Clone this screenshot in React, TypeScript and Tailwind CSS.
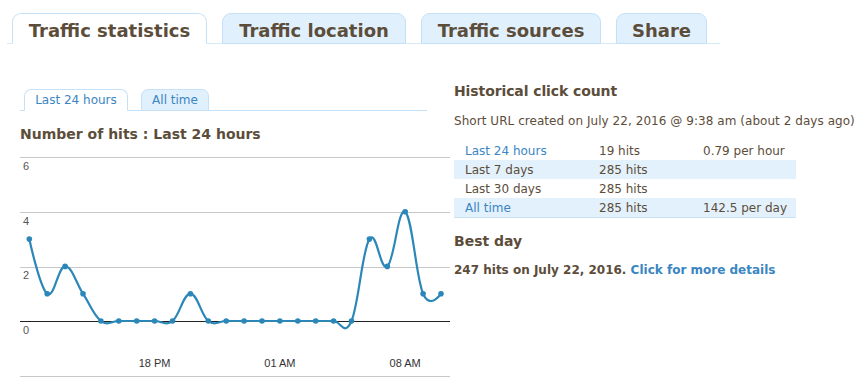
import React from "react";

const hits = [3, 1, 2, 1, 0, 0, 0, 0, 0, 1, 0, 0, 0, 0, 0, 0, 0, 0, 0, 3, 2, 4, 1, 1];

// chart geometry (svg coords)
const X0 = 9.3;
const DX = 17.9;
const BASE = 165;
const UNIT = 27.3;

function splinePath(vals: number[]) {
  const pts = vals.map((v, i) => ({ x: X0 + i * DX, y: BASE - v * UNIT }));
  const smoothing = 1.5;
  const denom = smoothing + 1;
  const ctrl = pts.map((p, i) => {
    const prev = pts[i - 1];
    const next = pts[i + 1];
    if (!prev || !next) return { lx: p.x, ly: p.y, rx: p.x, ry: p.y };
    const lx = (smoothing * p.x + prev.x) / denom;
    let ly = (smoothing * p.y + prev.y) / denom;
    const rx = (smoothing * p.x + next.x) / denom;
    let ry = (smoothing * p.y + next.y) / denom;
    const corr = ((ry - ly) * (rx - p.x)) / (rx - lx) + p.y - ry;
    ly += corr;
    ry += corr;
    return { lx, ly, rx, ry };
  });
  let d = `M ${pts[0].x} ${pts[0].y}`;
  for (let i = 1; i < pts.length; i++) {
    const a = ctrl[i - 1];
    const b = ctrl[i];
    d += ` C ${a.rx} ${a.ry} ${b.lx} ${b.ly} ${pts[i].x} ${pts[i].y}`;
  }
  return { d, pts };
}

function HitsChart() {
  const { d, pts } = splinePath(hits);
  const grid = [1, 56, 111];
  return (
    <svg width="430" height="222" viewBox="0 0 430 222" className="block">
      {grid.map((y) => (
        <line key={y} x1="0" x2="430" y1={y + 0.5} y2={y + 0.5} stroke="#c8c8c8" strokeWidth="1" />
      ))}
      <line x1="0" x2="430" y1="165.5" y2="165.5" stroke="#222" strokeWidth="1" />
      <line x1="0" x2="430" y1="220.5" y2="220.5" stroke="#c8c8c8" strokeWidth="1" />
      <g fontFamily="'Liberation Sans', Arial, sans-serif" fontSize="11" fill="#555">
        <text x="3" y="14">6</text>
        <text x="3" y="69">4</text>
        <text x="3" y="123">2</text>
        <text x="3" y="178">0</text>
      </g>
      <g fontFamily="'Liberation Sans', Arial, sans-serif" fontSize="11" fill="#333" textAnchor="middle">
        <text x={X0 + 7 * DX} y="211">18 PM</text>
        <text x={X0 + 14 * DX} y="211">01 AM</text>
        <text x={X0 + 21 * DX} y="211">08 AM</text>
      </g>
      <path d={d} fill="none" stroke="#2c87b9" strokeWidth="2.2" strokeLinejoin="round" />
      {pts.map((p, i) => (
        <circle key={i} cx={p.x} cy={p.y} r="2.8" fill="#2c87b9" />
      ))}
    </svg>
  );
}

const tabs = [
  { label: "Traffic statistics", w: "w-[195px]", active: true },
  { label: "Traffic location", w: "w-[184px]", active: false },
  { label: "Traffic sources", w: "w-[180px]", active: false },
  { label: "Share", w: "w-[91px]", active: false },
];

const rows = [
  { label: "Last 24 hours", hits: "19 hits", rate: "0.79 per hour", link: true, shade: false },
  { label: "Last 7 days", hits: "285 hits", rate: "", link: false, shade: true },
  { label: "Last 30 days", hits: "285 hits", rate: "", link: false, shade: false },
  { label: "All time", hits: "285 hits", rate: "142.5 per day", link: true, shade: true },
];

export default function App() {
  return (
    <div className="w-[863px] h-[377px] overflow-hidden bg-white text-[#5c4d3b] font-['DejaVu_Sans',Verdana,sans-serif]">
      {/* Main tabs */}
      <div className="ml-[7px] mt-[13px] w-[713px] border-b border-[#d6ebfa] flex gap-[15px] pl-[5px]">
        {tabs.map((t) => (
          <div
            key={t.label}
            className={`${t.w} h-[31px] -mb-px pt-[3px] flex items-center justify-center rounded-t-[9px] border border-[#c5e1f7] text-[18px] font-bold ${
              t.active ? "bg-white border-b-white" : "bg-[#e1f0fd]"
            }`}
          >
            {t.label}
          </div>
        ))}
      </div>

      <div className="flex mt-[45px]">
        {/* Left column */}
        <div className="ml-[20px] w-[430px] flex flex-col">
          <div className="w-[407px] border-b border-[#c5e1f7] flex gap-[13px] pl-[4px]">
            <div className="w-[104px] h-[22px] -mb-px flex items-center justify-center rounded-t-[7px] border border-[#c5e1f7] border-b-white bg-white text-[12px] text-[#3a86c2]">
              Last 24 hours
            </div>
            <div className="w-[68px] h-[22px] -mb-px flex items-center justify-center rounded-t-[7px] border border-[#c5e1f7] bg-[#e1f0fd] text-[12px] text-[#3a86c2]">
              All time
            </div>
          </div>
          <div className="mt-[13px] h-[20px] flex items-center text-[14px] font-bold">
            Number of hits : Last 24 hours
          </div>
          <div className="mt-[12px]">
            <HitsChart />
          </div>
        </div>

        {/* Right column */}
        <div className="ml-[4px] flex flex-col -mt-[8px]">
          <div className="h-[20px] flex items-center text-[14px] font-bold tracking-[-0.1px]">
            Historical click count
          </div>
          <div className="mt-[10px] h-[20px] flex items-center text-[12px] tracking-[0.05px]">
            Short URL created on July 22, 2016 @ 9:38 am (about 2 days ago)
          </div>
          <div className="mt-[10px] w-[342px] text-[12px]">
            {rows.map((r) => (
              <div
                key={r.label}
                className={`flex h-[19px] items-center ${r.shade ? "bg-[#e3f1fc]" : ""} ${
                  r.label === "All time" ? "border-b border-[#c8e2f5] h-[20px]" : ""
                }`}
              >
                <div className={`w-[134px] pl-[11px] ${r.link ? "text-[#3a86c2]" : ""}`}>{r.label}</div>
                <div className="w-[104px] pl-[11px]">{r.hits}</div>
                <div className="w-[104px] pl-[11px]">{r.rate}</div>
              </div>
            ))}
          </div>
          <div className="mt-[13px] h-[20px] flex items-center text-[14px] font-bold">
            Best day
          </div>
          <div className="mt-[9px] h-[20px] flex items-center text-[12px] font-bold">
            247 hits on July 22, 2016.&nbsp;<span className="text-[#3a86c2]">Click for more details</span>
          </div>
        </div>
      </div>
    </div>
  );
}
